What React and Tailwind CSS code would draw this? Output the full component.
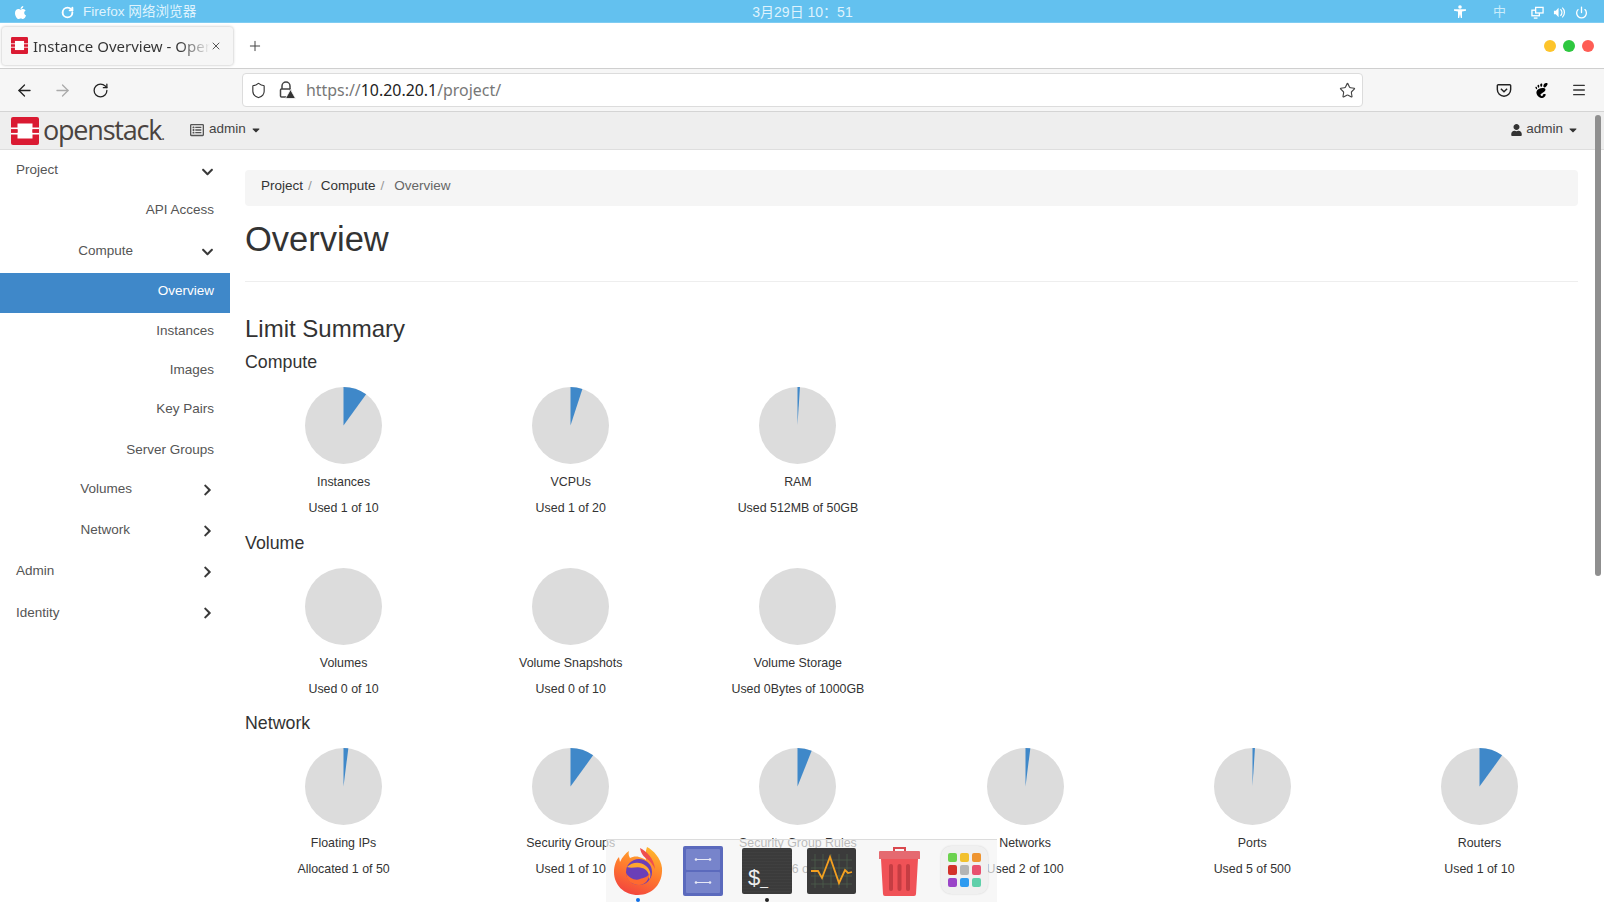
import { ArrowLeft, ArrowRight, Menu, Plus, Power, RotateCw, Shield, Star, X } from "lucide-react";
import { FaApple, FaCaretDown, FaChevronDown, FaChevronRight, FaRegListAlt, FaUser } from "react-icons/fa";
import { SiGnome } from "react-icons/si";

const sections = [
  {
    title: "Compute",
    items: [
      { label: "Instances", detail: "Used 1 of 10", ratio: 0.1 },
      { label: "VCPUs", detail: "Used 1 of 20", ratio: 0.05 },
      { label: "RAM", detail: "Used 512MB of 50GB", ratio: 0.01 },
    ],
  },
  {
    title: "Volume",
    items: [
      { label: "Volumes", detail: "Used 0 of 10", ratio: 0 },
      { label: "Volume Snapshots", detail: "Used 0 of 10", ratio: 0 },
      { label: "Volume Storage", detail: "Used 0Bytes of 1000GB", ratio: 0 },
    ],
  },
  {
    title: "Network",
    items: [
      { label: "Floating IPs", detail: "Allocated 1 of 50", ratio: 0.02 },
      { label: "Security Groups", detail: "Used 1 of 10", ratio: 0.1 },
      { label: "Security Group Rules", detail: "Used 6 of 100", ratio: 0.06 },
      { label: "Networks", detail: "Used 2 of 100", ratio: 0.02 },
      { label: "Ports", detail: "Used 5 of 500", ratio: 0.01 },
      { label: "Routers", detail: "Used 1 of 10", ratio: 0.1 },
    ],
  },
];

function Pie({ ratio }) {
  const angle = ratio * 2 * Math.PI;
  const x = 50 + 50 * Math.sin(angle);
  const y = 50 - 50 * Math.cos(angle);
  return (
    <svg viewBox="0 0 100 100" className="w-[77px] h-[77px] block">
      <circle cx="50" cy="50" r="50" fill="#dcdcdc" />
      {ratio > 0 && <path d={`M50 50 L50 0 A50 50 0 0 1 ${x} ${y} Z`} fill="#3f88c9" />}
    </svg>
  );
}

function LogoMark({ className }) {
  return (
    <svg viewBox="0 0 28 28" className={className}>
      <rect width="28" height="28" rx="2" fill="#da1a32" />
      <rect x="6.5" y="6.5" width="15" height="15" fill="#fff" />
      <rect x="0" y="10.5" width="9" height="1.8" fill="#fff" />
      <rect x="0" y="15.7" width="9" height="1.8" fill="#fff" />
      <rect x="19" y="10.5" width="9" height="1.8" fill="#fff" />
      <rect x="19" y="15.7" width="9" height="1.8" fill="#fff" />
      <rect x="0" y="12.3" width="6.5" height="3.4" fill="#da1a32" />
      <rect x="21.5" y="12.3" width="6.5" height="3.4" fill="#da1a32" />
    </svg>
  );
}

function SystemBar() {
  return (
    <div className="h-[23px] shrink-0 flex items-center pt-[2px] bg-[#63c1ef] border-b border-[#7fccf2] text-[#dff3fd] text-[13.6px] relative">
      <FaApple className="w-[15px] h-[15px] text-white ml-[13px]" />
      <RotateCw className="w-[13px] h-[13px] text-white ml-[33px]" strokeWidth={3.5} />
      <span className="ml-[9px]">Firefox 网络浏览器</span>
      <span className="ml-[556px] text-[14px]">3月29日 10：51</span>
      <div className="ml-auto flex items-center text-white">
        <svg viewBox="0 0 14 14" className="w-[14px] h-[14px] mr-[2px]" fill="#fff">
          <circle cx="7" cy="2" r="1.8" />
          <path d="M1 4.2h12v1.6L9 6.4V13H7.8L7 9l-.8 4H5V6.4L1 5.8z" />
        </svg>
        <span className="ml-[24px] text-[13px] text-[#c9ecfb]">中</span>
        <svg viewBox="0 0 14 14" className="w-[13px] h-[13px] ml-[25px]" fill="none" stroke="#fff" strokeWidth="1.4">
          <rect x="1" y="4.5" width="8" height="6" />
          <rect x="5" y="1.5" width="8" height="6" fill="#63c1ef" />
          <path d="M3 13h4" />
        </svg>
        <svg viewBox="0 0 14 14" className="w-[13px] h-[13px] ml-[9px]" fill="#fff">
          <path d="M1 5h2l3-3v10L3 9H1z" />
          <path d="M8 3.5a4.5 4.5 0 0 1 0 7M10 1.8a7 7 0 0 1 0 10.4" fill="none" stroke="#fff" strokeWidth="1.3" />
        </svg>
        <Power className="w-[13px] h-[13px] ml-[9px] mr-[16px]" strokeWidth={2.4} />
      </div>
    </div>
  );
}

function TabBar() {
  return (
    <div className="h-[46px] shrink-0 flex items-center bg-white border-b border-[#cfcfcf] text-[#333]">
      <div className="ml-[2px] w-[231px] h-[38px] flex items-center bg-[#f6f6f6] rounded-[3px] shadow-[0_0_3px_rgba(0,0,0,0.3)] pl-[9px] pr-[10px]">
        <LogoMark className="w-[17px] h-[17px] shrink-0" />
        <span
          className="ml-[5px] pt-[2px] w-[177px] overflow-hidden whitespace-nowrap text-[15px] bg-clip-text text-transparent bg-gradient-to-r from-[#333] from-[82%] to-[#f6f6f6]"
          style={{ fontFamily: '"Noto Sans", sans-serif' }}
        >
          Instance Overview - OpenStack Dashboard
        </span>
        <X className="w-[12px] h-[12px] text-[#555] shrink-0" />
      </div>
      <Plus className="w-[16px] h-[16px] ml-[14px] text-[#444]" strokeWidth={1.5} />
      <div className="ml-auto flex items-center gap-[7px] mr-[10px]">
        <span className="w-[12px] h-[12px] rounded-full bg-[#fdc42b]" />
        <span className="w-[12px] h-[12px] rounded-full bg-[#2ec73f]" />
        <span className="w-[12px] h-[12px] rounded-full bg-[#fe5d55]" />
      </div>
    </div>
  );
}

function Toolbar() {
  return (
    <div className="h-[43px] shrink-0 flex items-center bg-[#f6f6f6] border-b border-[#d4d4d4] relative" style={{ fontFamily: '"Noto Sans", sans-serif' }}>
      <ArrowLeft className="w-[19px] h-[19px] ml-[15px] text-[#222]" strokeWidth={1.6} />
      <ArrowRight className="w-[19px] h-[19px] ml-[19px] text-[#aaa]" strokeWidth={1.6} />
      <RotateCw className="w-[17px] h-[17px] ml-[20px] text-[#222]" strokeWidth={1.8} />
      <div className="ml-[133px] w-[1121px] h-[34px] bg-white border border-[#dcdcdc] rounded-[4px] flex items-center">
        <Shield className="w-[17px] h-[17px] ml-[7px] text-[#333]" strokeWidth={1.6} />
        <svg viewBox="0 0 18 18" className="w-[18px] h-[18px] ml-[11px]">
          <path d="M4 8V5a4 4 0 0 1 8 0v3" fill="none" stroke="#444" strokeWidth="1.5" />
          <rect x="2.5" y="8" width="10" height="8" rx="1" fill="none" stroke="#444" strokeWidth="1.5" />
          <path d="M12.5 8.5l5 9h-10z" fill="#333" stroke="#fff" strokeWidth="0.8" />
        </svg>
        <span className="ml-[10px] pt-[2px] text-[15.9px] text-[#777] whitespace-nowrap">
          https://<span className="text-[#222]">10.20.20.1</span>/project/
        </span>
        <Star className="w-[17px] h-[17px] ml-auto mr-[6px] text-[#444]" strokeWidth={1.6} />
      </div>
      <div className="ml-auto flex items-center text-[#222]">
        <svg viewBox="0 0 18 16" className="w-[16px] h-[15px]" fill="none" stroke="#222" strokeWidth="1.6">
          <path d="M2.5 1.5h13a1 1 0 0 1 1 1V7a7.5 7.500 0 0 1-15 0V2.5a1 1 0 0 1 1-1z" />
          <path d="M5.500 6l3.500 3.500L12.500 6" />
        </svg>
        <SiGnome className="w-[15px] h-[15px] ml-[22px] text-black" />
        <Menu className="w-[16px] h-[16px] ml-[22px] mr-[17px] text-[#333]" strokeWidth={2} />
      </div>
    </div>
  );
}

function TopNav() {
  return (
    <div className="h-[38px] shrink-0 flex items-center bg-[#eeeeee] border-b border-[#dedede] text-[13.5px] text-[#444]">
      <LogoMark className="w-[28px] h-[28px] ml-[11px]" />
      <span className="ml-[4px] w-[134px] pb-[2px] text-[27px] font-medium leading-none text-[#4a4340] tracking-[-1.2px] whitespace-nowrap" style={{ fontFamily: '"Open Sans", sans-serif' }}>
        openstack<span className="text-[14px]">.</span>
      </span>
      <FaRegListAlt className="w-[14px] h-[14px] mb-[2px] ml-[13px] text-[#555]" />
      <span className="ml-[5px] pb-[3px]">admin</span>
      <FaCaretDown className="w-[12px] h-[12px] ml-[4px] mb-[2px] text-[#333]" />
      <FaUser className="w-[11px] h-[12px] ml-auto mb-[2px] text-[#333]" />
      <span className="ml-[4px] pb-[3px]">admin</span>
      <FaCaretDown className="w-[12px] h-[12px] ml-[4px] mr-[25px] mb-[2px] text-[#333]" />
    </div>
  );
}

function SideGroup({ label, height, open, left, className = "", chevron = "" }) {
  const Icon = open ? FaChevronDown : FaChevronRight;
  return (
    <div className={`flex items-center relative ${height} ${className} ${left ? "pl-4" : "justify-end"}`}>
      <span>{label}</span>
      <Icon className={`absolute left-[201px] top-1/2 -translate-y-1/2 w-[13px] h-[13px] text-[#3a3a3a] ${chevron}`} />
    </div>
  );
}

function SideLink({ label, active, height, className = "" }) {
  return (
    <div className={`flex items-center justify-end pr-4 ${className} ${height} ${active ? "bg-[#3f88c9] text-white" : ""}`}>{label}</div>
  );
}

function Sidebar() {
  return (
    <aside className="w-[230px] shrink-0 text-[13.5px] text-[#555]">
      <SideGroup label="Project" height="h-[40px]" open left chevron="mt-[2px]" />
      <SideLink label="API Access" height="h-[41px]" />
      <SideGroup label="Compute" height="h-[42px]" open className="pb-[2px] pr-[97px]" />
      <SideLink label="Overview" height="h-[40px]" active className="pb-1" />
      <SideLink label="Instances" height="h-[39px]" className="pb-[2px]" />
      <SideLink label="Images" height="h-[39px]" className="pb-[2px]" />
      <SideLink label="Key Pairs" height="h-[39px]" className="pb-[2px]" />
      <SideLink label="Server Groups" height="h-[39px]" className="pt-[1px]" />
      <SideGroup label="Volumes" height="h-[41px]" className="pr-[98px]" />
      <SideGroup label="Network" height="h-[41px]" className="pr-[100px]" />
      <SideGroup label="Admin" height="h-[41px]" left />
      <SideGroup label="Identity" height="h-[42px]" left />
    </aside>
  );
}

function LimitSection({ section }) {
  return (
    <section>
      <h4 className="text-[17.8px] leading-[20px] h-[20px]">{section.title}</h4>
      <div className="-mx-[15px] grid grid-cols-6 mt-[15px] mb-[17.5px]">
        {section.items.map((item) => (
          <div key={item.label} className="flex flex-col items-center whitespace-nowrap text-[12.4px] leading-[14px]">
            <Pie ratio={item.ratio} />
            <div className="mt-[11px]">{item.label}</div>
            <div className="mt-[12px]">{item.detail}</div>
          </div>
        ))}
      </div>
    </section>
  );
}

function Dock() {
  return (
    <div className="absolute left-[606px] top-[839px] w-[391px] h-[63px] bg-[#f4f4f4]/70 border-t border-[#dcdcdc] flex items-start pt-[6px] pl-[7px]">
      {/* firefox */}
      <div className="relative w-[50px] h-[50px]">
        <svg viewBox="0 0 50 50" className="w-[50px] h-[50px]">
          <defs>
            <linearGradient id="fx" x1="0.7" y1="0" x2="0.3" y2="1">
              <stop offset="0" stopColor="#ffb52c" />
              <stop offset="0.5" stopColor="#ff7a2e" />
              <stop offset="1" stopColor="#f2433f" />
            </linearGradient>
          </defs>
          <path d="M25 49C11 49 1 39 1 26c0-6 2-12 5-15l1 5c2-5 6-9 9-11-1 3 0 5 1 7 2-1 6-2 9-1 2 .5 5 1.500 7 3-1-4-.5-9 1-13 6 3 14 11 15 21 1 16-10 27-24 27z" fill="url(#fx)" />
          <path d="M27 2c6 3 14 10 15 21-2-4-5-8-8-10-3-2-6-5-7-11z" fill="#ef4f4f" />
          <circle cx="26" cy="26" r="13" fill="#6b3fb8" />
          <path d="M14 21c5-5 13-6 19-1 4 3 6 9 3 14 1-6-2-11-7-12-5-2-10 1-15-1z" fill="#ffa62f" />
          <path d="M26 39c-7 0-13-5-13-12 3 5 9 8 14 6 3-1 8-2 10-6-1 7-5 12-11 12z" fill="#ff6a2f" />
        </svg>
        <span className="absolute left-[23px] top-[52px] w-[4px] h-[4px] rounded-full bg-[#0f6fe8]" />
      </div>
      {/* files */}
      <svg viewBox="0 0 40 50" className="w-[40px] h-[50px] ml-[20px]">
        <rect width="40" height="50" rx="2" fill="#5b6abd" />
        <rect x="3" y="3" width="34" height="21" rx="1" fill="#7784cb" />
        <rect x="3" y="26" width="34" height="21" rx="1" fill="#7784cb" />
        <path d="M13 13.500h14M13 36.500h14" stroke="#e6e8f5" strokeWidth="1.200" />
        <circle cx="13" cy="13.500" r="1.300" fill="#e6e8f5" />
        <circle cx="27" cy="13.500" r="1.300" fill="#e6e8f5" />
        <circle cx="13" cy="36.500" r="1.300" fill="#e6e8f5" />
        <circle cx="27" cy="36.500" r="1.300" fill="#e6e8f5" />
      </svg>
      {/* terminal */}
      <div className="relative w-[50px] h-[46px] ml-[19px] mt-[2px] bg-[repeating-linear-gradient(0deg,#3b3b3b_0px,#3b3b3b_2px,#444_3px)] rounded-[2px] text-[#eee]">
        <span className="absolute left-[6px] bottom-[3px] text-[22px] leading-[22px]" style={{ fontFamily: '"Liberation Sans", sans-serif' }}>
          $<span className="text-[14px]">_</span>
        </span>
        <span className="absolute left-[23px] top-[50px] w-[4px] h-[4px] rounded-full bg-[#222]" />
      </div>
      {/* system monitor */}
      <svg viewBox="0 0 49 46" className="w-[49px] h-[46px] ml-[15px] mt-[2px]">
        <rect width="49" height="46" rx="2" fill="#3b3b3b" />
        <path d="M8 6v34M16 6v34M24 6v34M32 6v34M40 6v34M4 12h41M4 20h41M4 28h41M4 36h41" stroke="#4d5e4d" strokeWidth="0.8" />
        <path d="M4 23h7l4 7 8-21 9 26 6-13 3 3 4-1" fill="none" stroke="#f4a020" strokeWidth="1.800" />
      </svg>
      {/* trash */}
      <svg viewBox="0 0 43 50" className="w-[43px] h-[50px] ml-[22px]">
        <path d="M16 5V2h11v3" fill="none" stroke="#d9484e" strokeWidth="2" />
        <path d="M1 6a1 1 0 0 1 1-1h39a1 1 0 0 1 1 1v7H1z" fill="#e56a70" />
        <path d="M3 13h37l-2 35a2 2 0 0 1-2 2H7a2 2 0 0 1-2-2z" fill="#f05257" />
        <rect x="11" y="18" width="4" height="27" rx="2" fill="#c53d43" />
        <rect x="19.500" y="18" width="4" height="27" rx="2" fill="#c53d43" />
        <rect x="28" y="18" width="4" height="27" rx="2" fill="#c53d43" />
      </svg>
      {/* app grid */}
      <div className="ml-[20px] w-[47px] h-[48px] bg-[#f0f0f0] rounded-[10px] shadow-[0_0_2px_rgba(0,0,0,0.15)] grid grid-cols-3 gap-[3px] p-[7px]">
        {["bg-[#6cd24f]", "bg-[#f2c12e]", "bg-[#ee9430]", "bg-[#d3312a]", "bg-[#b4b4b4]", "bg-[#e8506e]", "bg-[#9a44c8]", "bg-[#2f9bf0]", "bg-[#5fd0aa]"].map((c) => (
          <span key={c} className={`rounded-[2px] ${c}`} />
        ))}
      </div>
    </div>
  );
}

export default function App() {
  return (
    <div className="relative w-[1604px] h-[902px] overflow-hidden bg-white flex flex-col" style={{ fontFamily: '"Liberation Sans", "Noto Sans CJK SC", sans-serif' }}>
      <SystemBar />
      <TabBar />
      <Toolbar />
      <TopNav />
      <div className="flex-1 flex min-h-0">
        <Sidebar />
        <main className="flex-1 min-w-0 px-[15px] mr-[11px] text-[#333]">
          <nav className="mt-[20px] h-[36px] bg-[#f5f5f5] rounded-[4px] flex items-center pl-[16px] pb-[4px] text-[13.5px]">
            <span>Project</span>
            <span className="text-[#999] ml-[5px] mr-[9px]">/</span>
            <span>Compute</span>
            <span className="text-[#999] ml-[5px] mr-[10px]">/</span>
            <span className="text-[#666]">Overview</span>
          </nav>
          <h1 className="text-[34.5px] leading-[38px] mt-[14px]">Overview</h1>
          <hr className="mt-[23px] border-[#eee]" />
          <h3 className="text-[24px] leading-[26px] mt-[34px] mb-[10px]">Limit Summary</h3>
          {sections.map((section) => (
            <LimitSection key={section.title} section={section} />
          ))}
        </main>
      </div>
      <div className="absolute left-[1595px] top-[115px] w-[6px] h-[461px] rounded-full bg-[#8f8f8f]" />
      <Dock />
    </div>
  );
}
